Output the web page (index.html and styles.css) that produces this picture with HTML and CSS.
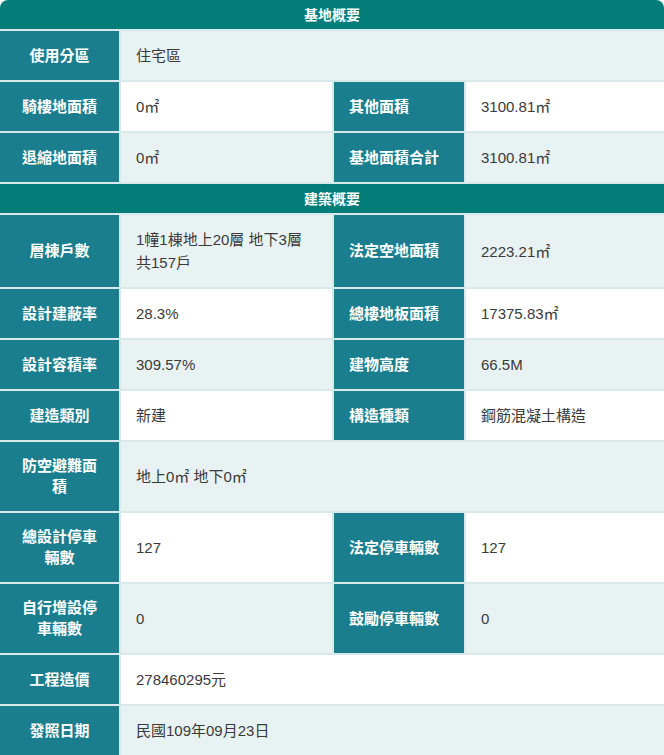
FILE: index.html
```html
<!DOCTYPE html>
<html lang="zh-Hant">
<head>
<meta charset="utf-8">
<title>建案概要</title>
<link rel="stylesheet" href="styles.css">
</head>
<body>
<div class="panel">
<table class="info">
<colgroup><col class="c1"><col class="c2"><col class="c3"><col class="c4"></colgroup>
<tbody>
<tr><th class="sec" colspan="4">基地概要</th></tr>
<tr class="alt"><td class="lab">使用分區</td><td class="val" colspan="3">住宅區</td></tr>
<tr><td class="lab">騎樓地面積</td><td class="val">0㎡</td><td class="lab lab2">其他面積</td><td class="val">3100.81㎡</td></tr>
<tr class="alt"><td class="lab">退縮地面積</td><td class="val">0㎡</td><td class="lab lab2">基地面積合計</td><td class="val">3100.81㎡</td></tr>
<tr><th class="sec" colspan="4">建築概要</th></tr>
<tr class="alt tall"><td class="lab">層棟戶數</td><td class="val">1幢1棟地上20層 地下3層 共157戶</td><td class="lab lab2">法定空地面積</td><td class="val">2223.21㎡</td></tr>
<tr><td class="lab">設計建蔽率</td><td class="val">28.3%</td><td class="lab lab2">總樓地板面積</td><td class="val">17375.83㎡</td></tr>
<tr class="alt"><td class="lab">設計容積率</td><td class="val">309.57%</td><td class="lab lab2">建物高度</td><td class="val">66.5M</td></tr>
<tr><td class="lab">建造類別</td><td class="val">新建</td><td class="lab lab2">構造種類</td><td class="val">鋼筋混凝土構造</td></tr>
<tr class="alt"><td class="lab">防空避難面積</td><td class="val" colspan="3">地上0㎡ 地下0㎡</td></tr>
<tr><td class="lab">總設計停車輛數</td><td class="val">127</td><td class="lab lab2">法定停車輛數</td><td class="val">127</td></tr>
<tr class="alt"><td class="lab">自行增設停車輛數</td><td class="val">0</td><td class="lab lab2">鼓勵停車輛數</td><td class="val">0</td></tr>
<tr><td class="lab">工程造價</td><td class="val" colspan="3">278460295元</td></tr>
<tr class="alt"><td class="lab">發照日期</td><td class="val" colspan="3">民國109年09月23日</td></tr>
</tbody>
</table>
</div>
</body>
</html>
```

FILE: styles.css
```css
html, body {
  margin: 0;
  padding: 0;
  background: #ffffff;
}

.panel {
  width: 664px;
  border-radius: 8px 8px 0 0;
  overflow: hidden;
}

.info {
  width: 664px;
  table-layout: fixed;
  border-collapse: collapse;
  font-family: "Liberation Sans", "Noto Sans CJK TC", sans-serif;
}

.c1 { width: 120px; }
.c2 { width: 213px; }
.c3 { width: 132px; }
.c4 { width: 199px; }

.info th,
.info td {
  border: 2px solid #d9e8eb;
}

.info tr:first-child th { border-top: 0; }
.info th:first-child,
.info td:first-child { border-left: 0; }
.info th:last-child,
.info td:last-child { border-right: 0; }
.info tr:last-child td { border-bottom: 0; }

.sec {
  background: #047d78;
  color: #ffffff;
  font-size: 14px;
  font-weight: bold;
  height: 29px;
  padding: 0;
  line-height: 20px;
  text-align: center;
}

.lab {
  background: #1a7e8e;
  color: #ffffff;
  font-size: 15px;
  font-weight: bold;
  line-height: 21px;
  padding: 13px 16px 14px;
  text-align: center;
}

.lab2 {
  text-align: left;
  padding-left: 15px;
  padding-right: 8px;
}

.val {
  background: #ffffff;
  color: #3a3a3a;
  font-size: 15px;
  line-height: 23px;
  padding: 13px 15px;
  text-align: left;
}

.alt .val {
  background: #e8f2f3;
}
```
